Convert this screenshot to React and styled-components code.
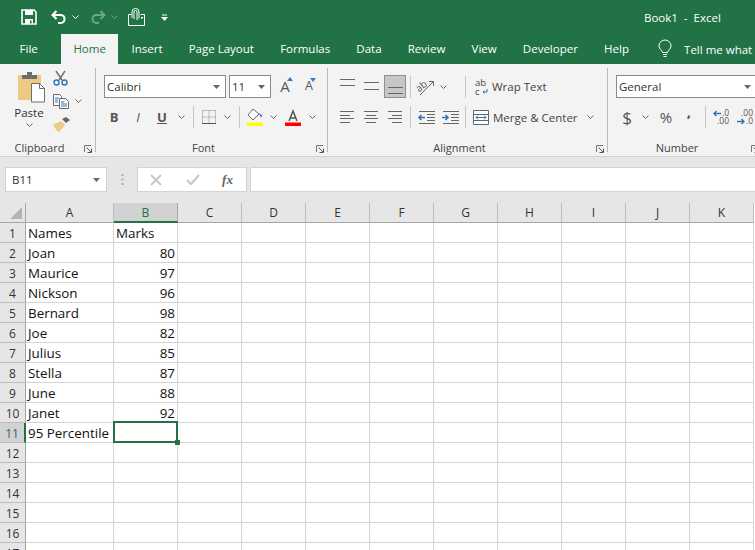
import styled, { createGlobalStyle } from "styled-components";

const GlobalStyle = createGlobalStyle`
  html, body {
    margin: 0;
    padding: 0;
    background: #fff;
  }
  body {
    font-family: "Open Sans", "Noto Sans", sans-serif;
  }
  svg {
    overflow: visible;
  }
`;

const GREEN = "#217346";

const Page = styled.div`
  width: 755px;
  height: 550px;
  overflow: hidden;
  display: flex;
  flex-direction: column;
`;

const TitleBar = styled.div`
  height: 34px;
  flex: none;
  background: ${GREEN};
  display: flex;
  align-items: center;
  color: #fff;
`;

const Quick = styled.div`
  flex: none;
  height: 16px;
  display: flex;
  align-items: center;
  justify-content: center;
  width: ${(p) => p.$w}px;
  margin-left: ${(p) => p.$ml || 0}px;
  opacity: ${(p) => (p.$dim ? 0.35 : 1)};
`;

const QuickGroup = styled.div`
  display: flex;
  align-items: center;
  padding-left: 18px;
  width: 644px;
  box-sizing: border-box;
`;

const DocTitle = styled.div`
  font-size: 11.5px;
  white-space: pre;
`;

const TabBar = styled.div`
  height: 30px;
  flex: none;
  background: ${GREEN};
  display: flex;
  padding-left: 6.5px;
`;

const Tab = styled.div`
  height: 30px;
  line-height: 30px;
  box-sizing: border-box;
  padding: 0 ${(p) => (p.$active ? 12.5 : 13.1)}px;
  font-size: 11.5px;
  color: ${(p) => (p.$active ? GREEN : "#fff")};
  background: ${(p) => (p.$active ? "#f3f3f3" : "transparent")};
  margin-right: ${(p) => p.$mr || 0}px;
  white-space: nowrap;
`;

const TellMe = styled.div`
  display: flex;
  align-items: center;
  gap: 12px;
  color: #fff;
  font-size: 11.5px;
  margin-left: 16px;
  white-space: nowrap;
`;

const Ribbon = styled.div`
  height: 93px;
  flex: none;
  box-sizing: border-box;
  background: #f3f3f3;
  border-bottom: 1px solid #d2d2d2;
  display: flex;
  overflow: hidden;
`;

const Group = styled.div`
  width: ${(p) => p.$w}px;
  flex: none;
  box-sizing: border-box;
  height: 84px;
  margin-top: 4px;
  border-right: 1px solid #b9b9b9;
  display: flex;
  flex-direction: column;
`;

const GroupBody = styled.div`
  flex: 1;
  min-height: 0;
  padding-top: 7px;
  display: flex;
  flex-direction: column;
  gap: 8px;
`;

const GroupFooter = styled.div`
  height: 14px;
  flex: none;
  margin-bottom: -2px;
  display: grid;
  grid-template-columns: 1fr auto 1fr 16px;
  align-items: center;
  font-size: 11px;
  color: #444;
`;

const Launcher = styled.div`
  grid-column: 4;
  justify-self: end;
  width: 8px;
  height: 8px;
  margin: 2px 3px 0 0;
  display: flex;
`;

const GroupLabel = styled.div`
  grid-column: 2;
`;

const ToolRow = styled.div`
  display: flex;
  align-items: center;
  height: ${(p) => p.$h || 22}px;
  padding-left: ${(p) => p.$pl || 0}px;
`;

const Tool = styled.div`
  width: ${(p) => (p.$on ? 22 : p.$w || 24)}px;
  margin: 0 ${(p) => (p.$on ? 1 : 0)}px;
  height: 100%;
  flex: none;
  display: flex;
  align-items: center;
  justify-content: center;
  color: #444;
  box-sizing: border-box;
  background: ${(p) => (p.$on ? "#c6c6c6" : "transparent")};
  border: ${(p) => (p.$on ? "1px solid #8f8f8f" : "none")};
`;

const LabelTool = styled.div`
  display: flex;
  align-items: center;
  gap: ${(p) => p.$gap}px;
  height: 100%;
  font-size: 11.5px;
  color: #444;
  white-space: nowrap;
  width: ${(p) => p.$w}px;
  flex: none;
`;

const Divider = styled.div`
  width: 1px;
  height: 22px;
  flex: none;
  background: #c6c6c6;
  margin: 0 ${(p) => p.$r ?? 3}px 0 ${(p) => p.$l ?? 3}px;
`;

const Select = styled.div`
  width: ${(p) => p.$w}px;
  margin-right: ${(p) => p.$mr || 0}px;
  height: 23px;
  flex: none;
  box-sizing: border-box;
  background: #fff;
  border: 1px solid #8a8a8a;
  display: flex;
  align-items: center;
  justify-content: space-between;
  padding: 0 5px 0 2px;
  font-size: 11.5px;
  color: #333;
`;

const ClipboardBody = styled.div`
  flex: 1;
  min-height: 0;
  display: flex;
  padding-left: 14px;
`;

const PasteColumn = styled.div`
  width: 30px;
  display: flex;
  flex-direction: column;
  align-items: center;
  padding-top: 4px;
  font-size: 11.5px;
  color: #333;
`;

const PasteArt = styled.div`
  margin-left: 4px;
  height: 31px;
`;

const PasteLabel = styled.div`
  margin-top: 2px;
  line-height: 16px;
`;

const PasteCaret = styled.div`
  margin-top: 2px;
  line-height: 0;
`;

const SmallTools = styled.div`
  margin-left: 9px;
  display: flex;
  flex-direction: column;
  padding-top: 2px;
  gap: 7px;
`;

const SmallTool = styled.div`
  height: 16px;
  display: flex;
  align-items: center;
  gap: 6px;
`;

const FormulaBar = styled.div`
  height: 46px;
  flex: none;
  box-sizing: border-box;
  background: #e6e6e6;
  padding: 10px 0 11px 5px;
  display: flex;
  align-items: stretch;
`;

const NameBox = styled.div`
  width: 102px;
  box-sizing: border-box;
  background: #fff;
  border: 1px solid #d4d4d4;
  display: flex;
  align-items: center;
  justify-content: space-between;
  padding: 0 6px;
  font-size: 11.5px;
  color: #333;
`;

const Grip = styled.div`
  width: 30px;
  display: flex;
  align-items: center;
  justify-content: center;
`;

const FormulaButtons = styled.div`
  width: 110px;
  box-sizing: border-box;
  background: #fff;
  border: 1px solid #d4d4d4;
  display: grid;
  grid-template-columns: 36px 37px 1fr;
  align-items: center;
  justify-items: center;
`;

const FxLabel = styled.span`
  font-family: "Liberation Serif", serif;
  font-style: italic;
  font-weight: 700;
  font-size: 13px;
  color: #666;
  margin-right: 2px;
`;

const FormulaInput = styled.div`
  flex: 1;
  margin-left: 3px;
  background: #fff;
  border: 1px solid #d4d4d4;
  border-right: none;
`;

const Sheet = styled.div`
  flex: 1;
  display: grid;
  grid-template-columns: 26px 88px repeat(10, 64px);
  grid-auto-rows: 20px;
  background: #fff;
  overflow: hidden;
  font-size: 13.4px;
`;

const Corner = styled.div`
  background: #e6e6e6;
  border-right: 1px solid #a6a6a6;
  border-bottom: 1px solid #a6a6a6;
  display: flex;
  align-items: flex-end;
  justify-content: flex-end;
  padding: 0 3px 3px 0;
`;

const ColHead = styled.div`
  box-sizing: border-box;
  background: ${(p) => (p.$on ? "#d2d2d2" : "#e6e6e6")};
  color: ${(p) => (p.$on ? GREEN : "#333")};
  border-right: 1px solid ${(p) => (p.$on ? "#a6a6a6" : "#bdbdbd")};
  border-bottom: ${(p) => (p.$on ? `2px solid ${GREEN}` : "1px solid #a6a6a6")};
  font-size: 12px;
  display: flex;
  align-items: center;
  justify-content: center;
`;

const RowHead = styled.div`
  box-sizing: border-box;
  background: ${(p) => (p.$on ? "#d2d2d2" : "#e6e6e6")};
  color: ${(p) => (p.$on ? GREEN : "#333")};
  border-right: ${(p) => (p.$on ? `2px solid ${GREEN}` : "1px solid #a6a6a6")};
  border-bottom: 1px solid #bdbdbd;
  padding-top: 1px;
  font-size: 12px;
  display: flex;
  align-items: center;
  justify-content: center;
`;

const Cell = styled.div`
  position: relative;
  box-sizing: border-box;
  border-right: 1px solid #d4d4d4;
  border-bottom: 1px solid #d4d4d4;
  padding: 0 2px;
  line-height: 21px;
  color: #111;
  white-space: nowrap;
  text-align: ${(p) => (p.$num ? "right" : "left")};
`;

const Selection = styled.div`
  position: absolute;
  left: -1px;
  top: -2px;
  width: 65px;
  height: 22px;
  box-sizing: border-box;
  border: 2px solid ${GREEN};
  z-index: 2;
`;

const Handle = styled.div`
  position: absolute;
  right: -4px;
  bottom: -4px;
  width: 5px;
  height: 5px;
  background: ${GREEN};
`;

const Caret = ({ color = "#666" }) => (
  <svg width="7" height="4" viewBox="0 0 7 4">
    <path d="M.5.5 3.5 3.5 6.5.5" fill="none" stroke={color} />
  </svg>
);

const SelectArrow = () => (
  <svg width="7" height="4" viewBox="0 0 7 4">
    <path d="M0 0h7L3.5 4z" fill="#666" />
  </svg>
);

const SaveIcon = () => (
  <svg width="16" height="16" viewBox="0 0 16 16">
    <path d="M1 1h12l2 2v12H1z" fill="none" stroke="#fff" strokeWidth="1.6" />
    <path d="M4 1h8v5H4zM4 10h8v5H4z" fill="#fff" />
    <path d="M9 11.5h1.6v3H9z" fill={GREEN} />
  </svg>
);

const UndoIcon = () => (
  <svg width="16" height="14" viewBox="0 0 16 14">
    <path d="M5.500 1 1.500 5l4 4" fill="none" stroke="#fff" strokeWidth="2" />
    <path d="M2 5h7.500c5 0 5.500 7 .5 8H7" fill="none" stroke="#fff" strokeWidth="2" />
  </svg>
);

const RedoIcon = () => (
  <svg width="16" height="14" viewBox="0 0 16 14">
    <path d="M10.500 1l4 4-4 4" fill="none" stroke="#fff" strokeWidth="2" />
    <path d="M14 5H6.500c-5 0-5.500 7-.5 8h3" fill="none" stroke="#fff" strokeWidth="2" />
  </svg>
);

const TouchIcon = () => (
  <svg width="17" height="17" viewBox="0 0 17 17">
    <path d="M.5 5.500h3M12.500 5.500h4v11H.5v-11" fill="none" stroke="#fff" />
    <path d="M6 10V3a1.500 1.500 0 0 1 3 0v8M4 9V3a3.500 3.500 0 0 1 7 0v6.500" fill="none" stroke="#fff" />
    <path d="M13 8h2v1.500h-2z" fill="#fff" />
  </svg>
);

const CustomizeIcon = () => (
  <svg width="7" height="7" viewBox="0 0 7 7">
    <path d="M1 .5h5v1H1zM0 3h7L3.500 7z" fill="#fff" />
  </svg>
);

const BulbIcon = () => (
  <svg width="14" height="18" viewBox="0 0 14 18">
    <path d="M4.500 12.500C4 10 1 9 1 6a6 6 0 0 1 12 0c0 3-3 4-3.500 6.500z" fill="none" stroke="#fff" />
    <path d="M5 14.500h4M5.500 16.500h3" stroke="#fff" />
  </svg>
);

const LauncherIcon = () => (
  <svg width="8" height="8" viewBox="0 0 8 8">
    <path d="M.5 7V.5H7" fill="none" stroke="#777" />
    <path d="M2.500 2.500 7 7M7.500 3.500v4h-4" fill="none" stroke="#555" />
  </svg>
);

const PasteIcon = () => (
  <svg width="28" height="31" viewBox="0 0 28 31">
    <path d="M1 3h23v25H1z" fill="#eec983" />
    <path d="M5 3h5V0h5v3h5v4H5z" fill="#6d6d6d" />
    <path d="M14.500 11.500h8l5 5v13.500h-13z" fill="#fff" stroke="#6d6d6d" />
    <path d="M22.500 11.500v5h5" fill="none" stroke="#6d6d6d" />
  </svg>
);

const CutIcon = () => (
  <svg width="15" height="16" viewBox="0 0 15 16">
    <path d="M3 1l6 9M12 1 6 10" stroke="#6d6d6d" strokeWidth="1.400" fill="none" />
    <circle cx="3.500" cy="12.500" r="2.500" fill="none" stroke="#2f75b5" strokeWidth="1.400" />
    <circle cx="11.500" cy="12.500" r="2.500" fill="none" stroke="#2f75b5" strokeWidth="1.400" />
  </svg>
);

const CopyIcon = () => (
  <svg width="16" height="15" viewBox="0 0 16 15">
    <path d="M.5.500h6l2 2v9H.5z" fill="#fff" stroke="#666" />
    <path d="M6.500 4.500h6l3 3v7h-9z" fill="#fff" stroke="#666" />
    <path d="M2 4h4M2 6h3M2 8h3M8 8h3M8 10h6M8 12h6" stroke="#2f75b5" />
  </svg>
);

const PainterIcon = () => (
  <svg width="17" height="15" viewBox="0 0 17 15">
    <path d="M9 2l4-2 4 3-4 3z" fill="#666" />
    <path d="M0 8l8-4 4 4-6 7-2-1-2-3z" fill="#eec983" />
  </svg>
);

const SizeMark = ({ down }) => (
  <svg width="6" height="4" viewBox="0 0 6 4">
    <path d={down ? "M0 0h6L3 4z" : "M3 0l3 4H0z"} fill="#3d79b8" />
  </svg>
);

const GrowA = styled.span`
  position: relative;
  font-size: ${(p) => p.$s}px;
  color: #555;
  display: inline-flex;
  line-height: 1;
`;

const GrowMark = styled.span`
  position: absolute;
  right: -3px;
  top: -2px;
  display: flex;
`;

const FormatLetter = styled.span`
  font-family: "Open Sans", sans-serif;
  font-size: 13px;
  color: #555;
  font-weight: ${(p) => (p.$b ? 700 : 400)};
  font-style: ${(p) => (p.$i ? "italic" : "normal")};
  text-decoration: ${(p) => (p.$u ? "underline" : "none")};
`;

const BordersIcon = () => (
  <svg width="14" height="14" viewBox="0 0 14 14">
    <path d="M.5 .5h13M.5 7h13M.5 .5v13M7 .5v13M13.500 .5v13" stroke="#888" strokeDasharray="1 1" fill="none" />
    <path d="M0 13.500h14" stroke="#555" />
  </svg>
);

const FillIcon = () => (
  <svg width="16" height="17" viewBox="0 0 16 17">
    <path d="M6 0 1 6l5 5 6-6z" fill="#fff" stroke="#666" />
    <path d="M12 4l3 2-1 3z" fill="#3d79b8" />
    <path d="M0 13.500h16v3.500H0z" fill="#ffff00" />
  </svg>
);

const FontColorIcon = () => (
  <svg width="16" height="17" viewBox="0 0 16 17">
    <path d="M4 12 8 2l4 10M5.500 9h5" fill="none" stroke="#555" strokeWidth="1.500" />
    <path d="M0 13.500h16v3.500H0z" fill="#ff0000" />
  </svg>
);

const LinesIcon = ({ rows, h = 12, stroke = "#666" }) => (
  <svg width="15" height={h} viewBox={`0 0 15 ${h}`}>
    {rows.map(([y, x1, x2]) => (
      <path key={y} d={`M${x1} ${y}.5H${x2}`} stroke={stroke} />
    ))}
  </svg>
);

const OrientationIcon = () => (
  <svg width="18" height="18" viewBox="0 0 18 18">
    <text x="0" y="11" fontSize="10" fill="#555" transform="rotate(-40 6 10)" fontFamily="Open Sans">ab</text>
    <path d="M3 17 16 4M12 3.500h4.500V8" fill="none" stroke="#666" />
  </svg>
);

const WrapIcon = () => (
  <svg width="14" height="18" viewBox="0 0 14 18">
    <text x="0" y="8" fontSize="9.500" fill="#444" fontFamily="Open Sans">ab</text>
    <text x="0" y="17" fontSize="9.500" fill="#444" fontFamily="Open Sans">c</text>
    <path d="M12 11v3H8M9.500 12.500 8 14l1.500 1.500" fill="none" stroke="#2f75b5" />
  </svg>
);

const MergeIcon = () => (
  <svg width="16" height="15" viewBox="0 0 16 15">
    <path d="M.5.500h15v14H.5zM.5 4.500h15M.5 10.500h15" fill="#fff" stroke="#666" />
    <path d="M3 7.500h10M5 5.500l-2 2 2 2M11 5.500l2 2-2 2" fill="none" stroke="#2f75b5" />
  </svg>
);

const IndentIcon = ({ out }) => (
  <svg width="17" height="13" viewBox="0 0 17 13">
    <path d="M1 .5h16M9 3.500h8M9 6.500h8M9 9.500h8M1 12.500h16" stroke="#666" fill="none" />
    <path
      d={out ? "M7 6.500H1M3.500 4 1 6.500 3.500 9" : "M0 6.500h6M3.500 4 6 6.500 3.500 9"}
      fill="none"
      stroke="#2f75b5"
      strokeWidth="1.600"
    />
  </svg>
);

const DecimalLabel = styled.span`
  font-size: 8.5px;
  line-height: 8px;
  color: #555;
  display: block;
`;

const DecimalIcon = styled.div`
  display: flex;
  flex-direction: column;
  align-items: flex-end;
  width: 16px;
`;

const Arrow = ({ left }) => (
  <svg width="8" height="7" viewBox="0 0 8 7">
    <path
      d={left ? "M8 3.500H1M3.500 1 1 3.500 3.500 6" : "M0 3.500h7M4.500 1 7 3.500 4.500 6"}
      fill="none"
      stroke="#2f75b5"
      strokeWidth="1.400"
    />
  </svg>
);

const DecimalRow = styled.div`
  display: flex;
  align-items: center;
  gap: 1px;
`;

const Glyph = styled.span`
  font-size: ${(p) => p.$s || 15}px;
  color: #555;
  font-weight: ${(p) => p.$weight || 400};
  margin-top: ${(p) => p.$mt || 0}px;
`;

const CornerMark = () => (
  <svg width="12" height="12" viewBox="0 0 12 12">
    <path d="M12 0v12H0z" fill="#b4b4b4" />
  </svg>
);

const GripIcon = () => (
  <svg width="3" height="11" viewBox="0 0 3 11">
    <path d="M0 0h3v2H0zM0 4.500h3v2H0zM0 9h3v2H0z" fill="#bdbdbd" />
  </svg>
);

const CrossIcon = () => (
  <svg width="12" height="12" viewBox="0 0 12 12">
    <path d="M1 1l10 10M11 1 1 11" stroke="#c6c6c6" strokeWidth="1.800" />
  </svg>
);

const CheckIcon = () => (
  <svg width="14" height="12" viewBox="0 0 14 12">
    <path d="M1 6l4 4 8-9" fill="none" stroke="#c6c6c6" strokeWidth="2" />
  </svg>
);

const tabs = ["Insert", "Page Layout", "Formulas", "Data", "Review", "View", "Developer", "Help"];
const columns = ["A", "B", "C", "D", "E", "F", "G", "H", "I", "J", "K"];
const rows = [
  ["Names", "Marks"],
  ["Joan", 80],
  ["Maurice", 97],
  ["Nickson", 96],
  ["Bernard", 98],
  ["Joe", 82],
  ["Julius", 85],
  ["Stella", 87],
  ["June", 88],
  ["Janet", 92],
  ["95 Percentile", ""],
  ["", ""],
  ["", ""],
  ["", ""],
  ["", ""],
  ["", ""],
  ["", ""],
];

const Launch = () => (
  <Launcher>
    <LauncherIcon />
  </Launcher>
);

const RowGroup = ({ n, name, mark }) => (
  <>
    <RowHead $on={n === 11}>{n}</RowHead>
    <Cell>{name}</Cell>
    <Cell $num={typeof mark === "number"}>
      {mark}
      {n === 11 && (
        <Selection>
          <Handle />
        </Selection>
      )}
    </Cell>
    {columns.slice(2).map((c) => (
      <Cell key={c} />
    ))}
  </>
);

const App = () => {
  return (
    <Page>
      <GlobalStyle />
      <TitleBar>
        <QuickGroup>
          <Quick $w={21}><SaveIcon /></Quick>
          <Quick $w={21} $ml={9}><UndoIcon /></Quick>
          <Quick $w={12}><Caret color="#fff" /></Quick>
          <Quick $w={21} $ml={6} $dim><RedoIcon /></Quick>
          <Quick $w={12} $dim><Caret color="#fff" /></Quick>
          <Quick $w={22} $ml={5}><TouchIcon /></Quick>
          <Quick $w={22} $ml={6}><CustomizeIcon /></Quick>
        </QuickGroup>
        <DocTitle>Book1  -  Excel</DocTitle>
      </TitleBar>
      <TabBar>
        <Tab $mr={10}>File</Tab>
        <Tab $active>Home</Tab>
        {tabs.map((t) => (
          <Tab key={t}>{t}</Tab>
        ))}
        <TellMe>
          <BulbIcon />
          Tell me what
        </TellMe>
      </TabBar>
      <Ribbon>
        <Group $w={96}>
          <ClipboardBody>
            <PasteColumn>
              <PasteArt><PasteIcon /></PasteArt>
              <PasteLabel>Paste</PasteLabel>
              <PasteCaret><Caret /></PasteCaret>
            </PasteColumn>
            <SmallTools>
              <SmallTool><CutIcon /></SmallTool>
              <SmallTool><CopyIcon /><Caret /></SmallTool>
              <SmallTool><PainterIcon /></SmallTool>
            </SmallTools>
          </ClipboardBody>
          <GroupFooter>
            <GroupLabel>Clipboard</GroupLabel>
            <Launch />
          </GroupFooter>
        </Group>
        <Group $w={232}>
          <GroupBody>
            <ToolRow $h={23} $pl={8}>
              <Select $w={122} $mr={3}>Calibri<SelectArrow /></Select>
              <Select $w={42}>11<SelectArrow /></Select>
              <Tool $w={28}>
                <GrowA $s={15}>A<GrowMark><SizeMark /></GrowMark></GrowA>
              </Tool>
              <Tool $w={20}>
                <GrowA $s={12.5}>A<GrowMark><SizeMark down /></GrowMark></GrowA>
              </Tool>
            </ToolRow>
            <ToolRow $pl={6}>
              <Tool><FormatLetter $b>B</FormatLetter></Tool>
              <Tool><FormatLetter $i>I</FormatLetter></Tool>
              <Tool><FormatLetter $b $u>U</FormatLetter></Tool>
              <Tool $w={14}><Caret /></Tool>
              <Divider $l={5} $r={4} />
              <Tool $w={22}><BordersIcon /></Tool>
              <Tool $w={14}><Caret /></Tool>
              <Divider $l={5} $r={4} />
              <Tool $w={22}><FillIcon /></Tool>
              <Tool $w={14}><Caret /></Tool>
              <Tool $w={26}><FontColorIcon /></Tool>
              <Tool $w={12}><Caret /></Tool>
            </ToolRow>
          </GroupBody>
          <GroupFooter>
            <GroupLabel>Font</GroupLabel>
            <Launch />
          </GroupFooter>
        </Group>
        <Group $w={280}>
          <GroupBody>
            <ToolRow $h={23} $pl={7}>
              <Tool><LinesIcon h={20} rows={[[2, 0, 15], [8, 0, 15]]} /></Tool>
              <Tool><LinesIcon h={20} rows={[[5, 0, 15], [12, 0, 15]]} /></Tool>
              <Tool $on><LinesIcon h={20} rows={[[10, 0, 15], [16, 0, 15]]} /></Tool>
              <Divider />
              <Tool><OrientationIcon /></Tool>
              <Tool $w={10}><Caret /></Tool>
              <Divider $l={17} $r={9} />
              <LabelTool $w={80} $gap={3}>
                <WrapIcon />
                Wrap Text
              </LabelTool>
            </ToolRow>
            <ToolRow $pl={7}>
              <Tool><LinesIcon rows={[[0, 0, 14], [4, 0, 10], [7, 0, 14], [11, 0, 10]]} /></Tool>
              <Tool><LinesIcon rows={[[0, 0, 14], [4, 2, 12], [7, 0, 14], [11, 2, 12]]} /></Tool>
              <Tool><LinesIcon rows={[[0, 0, 14], [4, 4, 14], [7, 0, 14], [11, 4, 14]]} /></Tool>
              <Divider />
              <Tool><IndentIcon out /></Tool>
              <Tool><IndentIcon /></Tool>
              <Divider $r={7} />
              <LabelTool $w={110} $gap={4}>
                <MergeIcon />
                Merge &amp; Center
              </LabelTool>
              <Tool $w={14}><Caret /></Tool>
            </ToolRow>
          </GroupBody>
          <GroupFooter>
            <GroupLabel>Alignment</GroupLabel>
            <Launch />
          </GroupFooter>
        </Group>
        <Group $w={155}>
          <GroupBody>
            <ToolRow $h={23} $pl={8}>
              <Select $w={141}>General<SelectArrow /></Select>
            </ToolRow>
            <ToolRow $pl={9}>
              <Tool $w={20}><Glyph $s={17}>$</Glyph></Tool>
              <Tool $w={16}><Caret /></Tool>
              <Tool $w={26}><Glyph>%</Glyph></Tool>
              <Tool $w={20}><Glyph $s={15} $weight={700} $mt={-12}>,</Glyph></Tool>
              <Divider $l={6} $r={7} />
              <Tool $w={16}>
                <DecimalIcon>
                  <DecimalRow><Arrow left /><DecimalLabel>.0</DecimalLabel></DecimalRow>
                  <DecimalLabel>.00</DecimalLabel>
                </DecimalIcon>
              </Tool>
              <Tool $w={32}>
                <DecimalIcon>
                  <DecimalLabel>.00</DecimalLabel>
                  <DecimalRow><Arrow /><DecimalLabel>.0</DecimalLabel></DecimalRow>
                </DecimalIcon>
              </Tool>
            </ToolRow>
          </GroupBody>
          <GroupFooter>
            <GroupLabel>Number</GroupLabel>
            <Launch />
          </GroupFooter>
        </Group>
      </Ribbon>
      <FormulaBar>
        <NameBox>B11<SelectArrow /></NameBox>
        <Grip><GripIcon /></Grip>
        <FormulaButtons>
          <CrossIcon />
          <CheckIcon />
          <FxLabel>fx</FxLabel>
        </FormulaButtons>
        <FormulaInput />
      </FormulaBar>
      <Sheet>
        <Corner><CornerMark /></Corner>
        {columns.map((c) => (
          <ColHead key={c} $on={c === "B"}>{c}</ColHead>
        ))}
        {rows.map(([name, mark], i) => (
          <RowGroup key={i} n={i + 1} name={name} mark={mark} />
        ))}
      </Sheet>
    </Page>
  );
};

export default App;
